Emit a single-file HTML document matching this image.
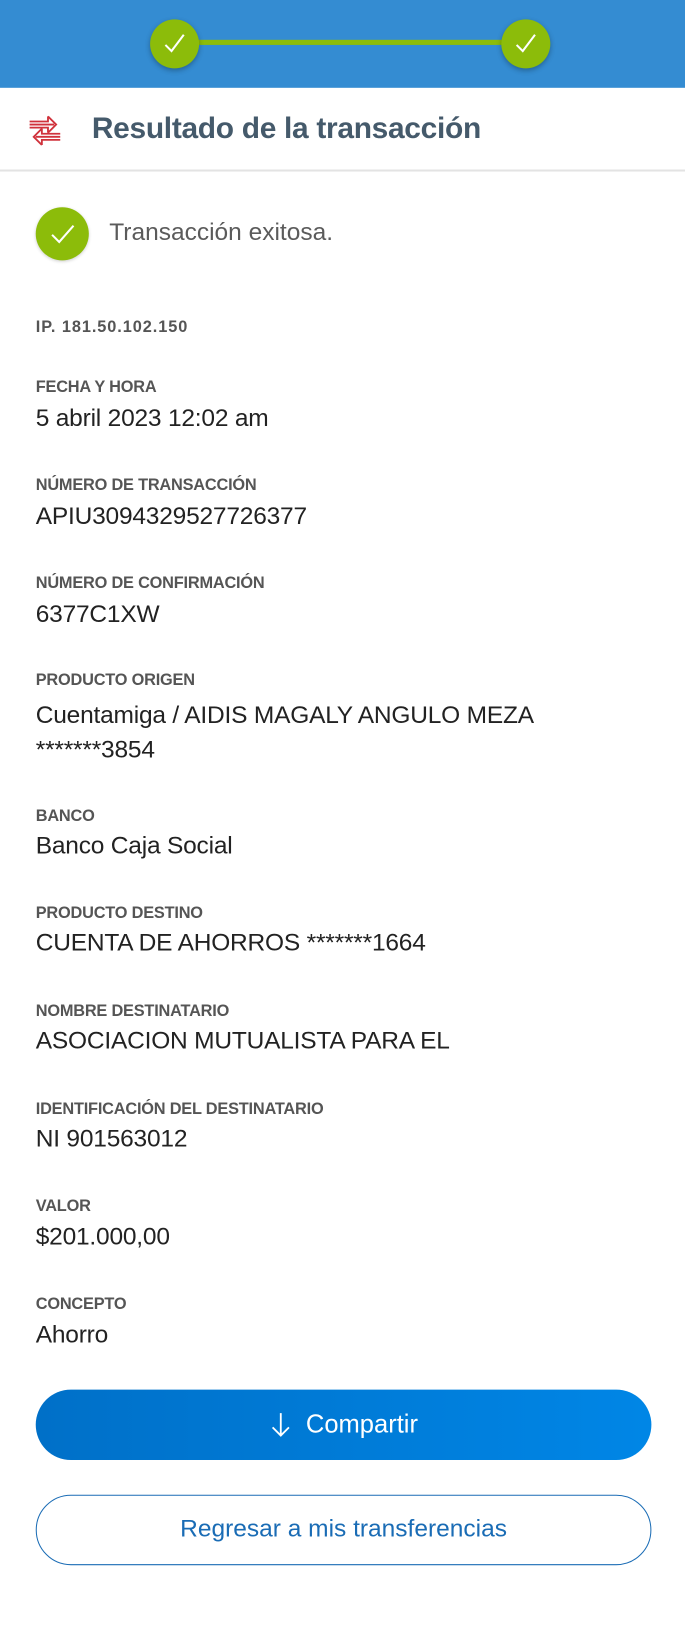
<!DOCTYPE html>
<html><head><meta charset="utf-8"><style>
*{margin:0;padding:0;box-sizing:border-box}
body{width:685px;height:1600px;background:#fff;font-family:"Liberation Sans",Arial,sans-serif;position:relative;overflow:hidden}
#w{position:absolute;left:0;top:0;width:685px;height:1600px;transform:scale(1.021);transform-origin:0 0}
.hdr{position:absolute;left:0;top:0;width:700px;height:86px;background:#348cd2}
.line{position:absolute;left:171px;top:39px;width:344px;height:5px;background:#8cbc0a}
.step{position:absolute;width:48px;height:48px;border-radius:50%;background:#8cbc0a;box-shadow:0 2px 5px rgba(0,0,0,.3)}
.title{position:absolute;left:90px;top:109px;font-size:29.3px;font-weight:bold;color:#455a6b;letter-spacing:-0.3px}
.div{position:absolute;left:0;top:166px;width:700px;height:2px;background:#e3e3e3}
.ok{position:absolute;left:35px;top:203px;width:52px;height:52px;border-radius:50%;background:#8cbc0a;box-shadow:0 1px 3px rgba(0,0,0,.2)}
.okt{position:absolute;left:107px;top:214px;font-size:24px;color:#5b5b5b}
.l{position:absolute;left:35px;font-size:16px;font-weight:bold;color:#555;letter-spacing:-0.2px}
.v{position:absolute;left:35px;font-size:24px;color:#222;letter-spacing:-0.2px}
.b1{position:absolute;left:35px;top:1361px;width:603px;height:69px;border-radius:35px;background:linear-gradient(90deg,#0070c8,#0086e6);color:#fff;font-size:25px;text-align:center;line-height:69px}
.b2{position:absolute;left:35px;top:1464px;width:603px;height:69px;border-radius:35px;border:1.5px solid #1a6cb5;color:#1a6cb5;font-size:24px;text-align:center;line-height:66px}
</style></head><body><div id="w">
<div class="hdr"></div>
<div class="line"></div>
<div class="step" style="left:147px;top:19px"><svg width="48" height="48"><path d="M15 25 L21 31 L33 15" fill="none" stroke="#fff" stroke-width="2"/></svg></div>
<div class="step" style="left:491px;top:19px"><svg width="48" height="48"><path d="M15 25 L21 31 L33 15" fill="none" stroke="#fff" stroke-width="2"/></svg></div>
<svg style="position:absolute;left:26px;top:108px" width="36" height="40" viewBox="0 0 36 40"><path d="M3 14 H27 M21 6 L29 14 L21 22 M21 6 V11 H3 M21 22 V17 H3" fill="none" stroke="#d0323c" stroke-width="1.8"/><path d="M33 26 H9 M15 18 L7 26 L15 34 M15 18 V23 H33 M15 34 V29 H33" fill="none" stroke="#d0323c" stroke-width="1.8"/></svg>
<div class="title">Resultado de la transacción</div>
<div class="div"></div>
<div class="ok"><svg width="52" height="52"><path d="M16 27 L23 34 L37 18" fill="none" stroke="#fff" stroke-width="2"/></svg></div>
<div class="okt">Transacción exitosa.</div>
<div class="l" style="top:312px;letter-spacing:0.9px">IP. 181.50.102.150</div>
<div class="l" style="top:371px">FECHA Y HORA</div><div class="v" style="top:396px">5 abril 2023 12:02 am</div>
<div class="l" style="top:467px">NÚMERO DE TRANSACCIÓN</div><div class="v" style="top:492px">APIU3094329527726377</div>
<div class="l" style="top:563px">NÚMERO DE CONFIRMACIÓN</div><div class="v" style="top:588px">6377C1XW</div>
<div class="l" style="top:658px">PRODUCTO ORIGEN</div><div class="v" style="top:684px;line-height:34px">Cuentamiga / AIDIS MAGALY ANGULO MEZA<br>*******3854</div>
<div class="l" style="top:791px">BANCO</div><div class="v" style="top:815px">Banco Caja Social</div>
<div class="l" style="top:886px">PRODUCTO DESTINO</div><div class="v" style="top:910px">CUENTA DE AHORROS *******1664</div>
<div class="l" style="top:982px">NOMBRE DESTINATARIO</div><div class="v" style="top:1006px">ASOCIACION MUTUALISTA PARA EL</div>
<div class="l" style="top:1078px">IDENTIFICACIÓN DEL DESTINATARIO</div><div class="v" style="top:1102px">NI 901563012</div>
<div class="l" style="top:1173px">VALOR</div><div class="v" style="top:1198px">$201.000,00</div>
<div class="l" style="top:1269px">CONCEPTO</div><div class="v" style="top:1294px">Ahorro</div>
<div class="b1"><svg width="22" height="26" style="vertical-align:-5px;margin-right:14px"><path d="M11 2 V24 M3 16 L11 24 L19 16" fill="none" stroke="#fff" stroke-width="1.8"/></svg>Compartir</div>
<div class="b2">Regresar a mis transferencias</div>
</div></body></html>
